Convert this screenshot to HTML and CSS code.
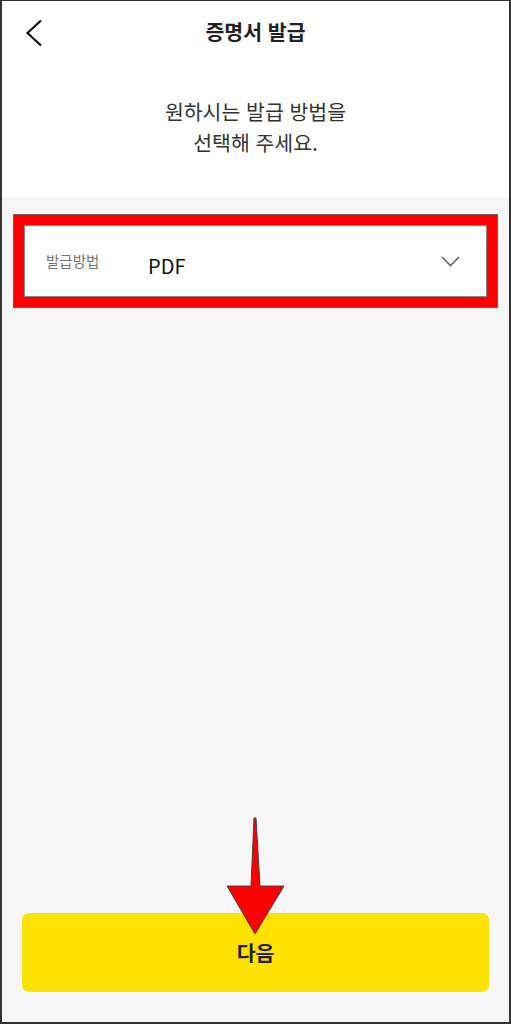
FILE: index.html
```html
<!DOCTYPE html>
<html lang="ko">
<head>
  <meta charset="UTF-8">
  <meta name="viewport" content="width=device-width, initial-scale=1.0">
  <title>증명서 발급</title>
  <link rel="stylesheet" href="styles.css">
</head>
<body>
  <div class="screen">
    <header class="topbar">
      <button class="back" type="button" aria-label="뒤로">
        <svg width="18" height="28" viewBox="0 0 18 28">
          <path d="M16 1.5 L2.5 14 L16 26.5" fill="none" stroke="#111" stroke-width="2.2"/>
        </svg>
      </button>
      <h1>증명서 발급</h1>
    </header>

    <section class="intro">
      <p>원하시는 발급 방법을<br>선택해 주세요.</p>
    </section>

    <main class="content">
      <div class="highlight">
        <div class="select-row">
          <span class="select-label">발급방법</span>
          <span class="select-value">PDF</span>
          <svg class="caret" width="19" height="11" viewBox="0 0 19 11">
            <path d="M1 1 L9.5 9.5 L18 1" fill="none" stroke="#666" stroke-width="1.6"/>
          </svg>
        </div>
      </div>

      <button class="next" type="submit">다음</button>
    </main>

    <svg class="arrow" width="62" height="122" viewBox="0 0 62 122">
      <polygon points="30,2 32,2 36,70 60,70 31,118 3,70 27,70" fill="#ff0000" stroke="#444" stroke-width="1"/>
    </svg>
  </div>
</body>
</html>
```

FILE: styles.css
```css
* {
  box-sizing: border-box;
}
body {
  margin: 0;
  font-family: "Noto Sans CJK KR", "Noto Sans", sans-serif;
  color: #222;
}
.screen {
  position: relative;
  width: 511px;
  height: 1024px;
  border: 2px solid #333;
  border-top-width: 1px;
  display: flex;
  flex-direction: column;
  background-color: #f6f6f6;
}
.topbar {
  position: relative;
  height: 65px;
  padding-bottom: 5px;
  background-color: #fff;
  display: flex;
  align-items: center;
  justify-content: center;
}
.topbar h1 {
  margin: 0;
  font-size: 20.5px;
  font-weight: bold;
  color: #222;
}
.back {
  position: absolute;
  left: 23px;
  top: 18px;
  padding: 0;
  border: none;
  background: none;
  display: flex;
}
.intro {
  background-color: #fff;
  padding: 30px 0 39px;
  text-align: center;
}
.intro p {
  margin: 0;
  font-size: 20.5px;
  line-height: 31px;
  color: #333;
}
.content {
  flex: 1;
  display: flex;
  flex-direction: column;
  padding: 18px 0 30px;
}
.highlight {
  margin: 0 12px;
  border: 10px solid #ff0000;
  box-shadow: 0 0 0 1px #666, inset 0 0 0 1px #888;
  background-color: #fff;
}
.select-row {
  height: 72px;
  display: flex;
  align-items: center;
  padding: 0 27px 0 22px;
}
.select-label {
  width: 102px;
  font-size: 14.5px;
  color: #777;
  margin-top: -1px;
}
.select-value {
  flex: 1;
  font-size: 20px;
  color: #111;
  margin-top: 8px;
}
.caret {
  margin-top: 1px;
}
.next {
  margin: auto 20px 0;
  height: 79px;
  padding-bottom: 2px;
  border: none;
  border-radius: 7px;
  background-color: #ffe300;
  font-family: inherit;
  font-size: 20.5px;
  font-weight: bold;
  color: #222;
}
.arrow {
  position: absolute;
  left: 222px;
  top: 815px;
}
```
